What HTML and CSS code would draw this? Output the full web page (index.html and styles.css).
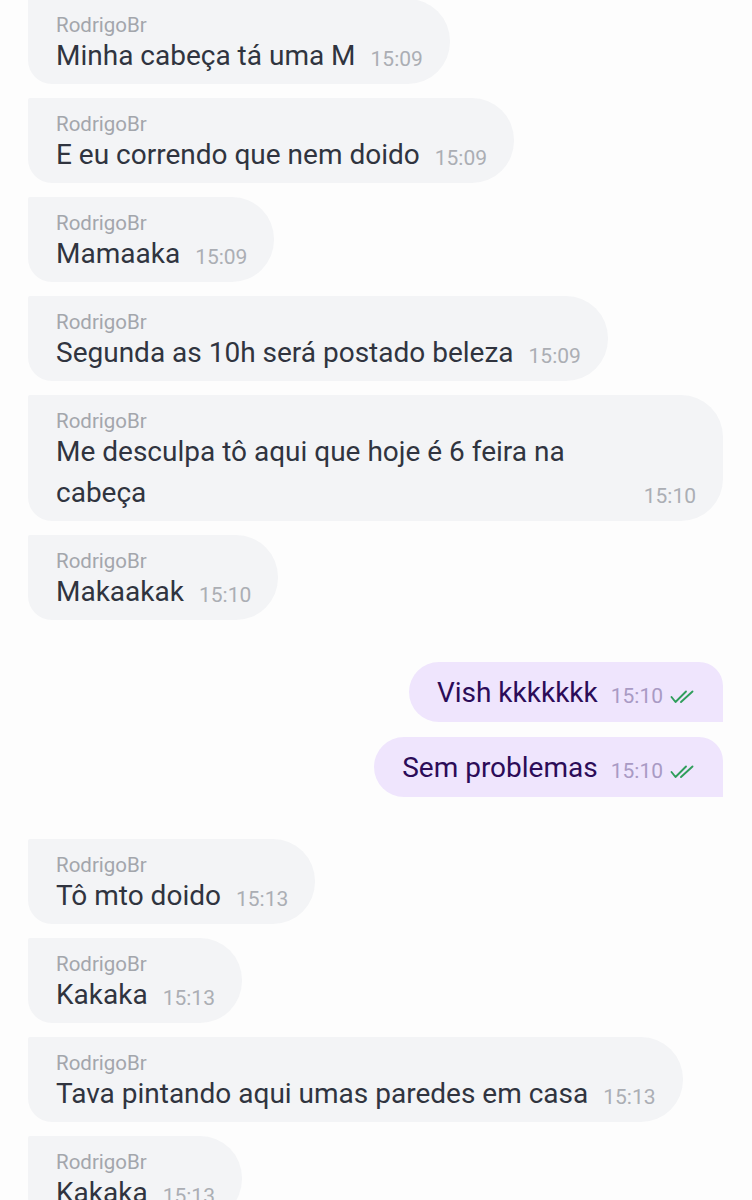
FILE: index.html
```html
<!DOCTYPE html>
<html lang="pt">
<head>
<meta charset="utf-8">
<title>Chat</title>
<link rel="stylesheet" href="styles.css">
</head>
<body>
<div class="chat">
  <div class="msg in">
    <div class="name">RodrigoBr</div>
    <div class="body">Minha cabeça tá uma M<span class="time">15:09</span></div>
  </div>
  <div class="msg in">
    <div class="name">RodrigoBr</div>
    <div class="body">E eu correndo que nem doido<span class="time">15:09</span></div>
  </div>
  <div class="msg in">
    <div class="name">RodrigoBr</div>
    <div class="body">Mamaaka<span class="time">15:09</span></div>
  </div>
  <div class="msg in">
    <div class="name">RodrigoBr</div>
    <div class="body">Segunda as 10h será postado beleza<span class="time">15:09</span></div>
  </div>
  <div class="msg in wide">
    <div class="name">RodrigoBr</div>
    <div class="body">Me desculpa tô aqui que hoje é 6 feira na<br>cabeça<span class="time">15:10</span></div>
  </div>
  <div class="msg in">
    <div class="name">RodrigoBr</div>
    <div class="body">Makaakak<span class="time">15:10</span></div>
  </div>

  <div class="msg out first">
    <div class="body">Vish kkkkkkk<span class="time">15:10<svg class="tick" viewBox="0 0 26 14" width="26" height="14"><path d="M1.5 7 L5.5 12 L16 1.5 M11 12 L22.5 1.5" fill="none" stroke="#2f9e5b" stroke-width="1.9" stroke-linecap="round" stroke-linejoin="round"/></svg></span></div>
  </div>
  <div class="msg out">
    <div class="body">Sem problemas<span class="time">15:10<svg class="tick" viewBox="0 0 26 14" width="26" height="14"><path d="M1.5 7 L5.5 12 L16 1.5 M11 12 L22.5 1.5" fill="none" stroke="#2f9e5b" stroke-width="1.9" stroke-linecap="round" stroke-linejoin="round"/></svg></span></div>
  </div>

  <div class="msg in first">
    <div class="name">RodrigoBr</div>
    <div class="body">Tô mto doido<span class="time">15:13</span></div>
  </div>
  <div class="msg in">
    <div class="name">RodrigoBr</div>
    <div class="body">Kakaka<span class="time">15:13</span></div>
  </div>
  <div class="msg in">
    <div class="name">RodrigoBr</div>
    <div class="body">Tava pintando aqui umas paredes em casa<span class="time">15:13</span></div>
  </div>
  <div class="msg in">
    <div class="name">RodrigoBr</div>
    <div class="body">Kakaka<span class="time">15:13</span></div>
  </div>
</div>
</body>
</html>
```

FILE: styles.css
```css
html, body {
  margin: 0;
  padding: 0;
  background: #fdfdfd;
}

body {
  font-family: Roboto, "Noto Sans", "Liberation Sans", sans-serif;
  width: 752px;
  height: 1200px;
  overflow: hidden;
}

.chat {
  display: flex;
  flex-direction: column;
  align-items: flex-start;
  padding: 0 29px 0 28px;
  margin-top: -1px;
}

.msg {
  max-width: 695px;
  box-sizing: border-box;
  margin-top: 14px;
}

.msg:first-child {
  margin-top: 0;
}

.msg.first {
  margin-top: 42px;
}

.msg.wide {
  width: 695px;
}

.msg.in {
  background: #f3f4f6;
  border-radius: 2px 42px 42px 24px;
  padding: 16px 27px 8px 28px;
}

.msg.out {
  align-self: flex-end;
  background: #efe5fd;
  border-radius: 30px 24px 0 30px;
  padding: 10px 27px 9px 28px;
}

.msg.out.first + .msg.out {
  margin-top: 15px;
}

.name {
  font-size: 20.5px;
  line-height: 20px;
  color: #a3a6ac;
  white-space: nowrap;
}

.body {
  font-size: 28px;
  line-height: 41px;
  color: #30343f;
}

.out .body {
  color: #2c0c58;
}

.time {
  float: right;
  font-size: 21px;
  line-height: 34px;
  padding-top: 7px;
  margin-left: 15px;
  color: #abaeb4;
  white-space: nowrap;
  display: flex;
  align-items: flex-start;
}

.out .time {
  color: #a99ac4;
  margin-left: 13px;
}

.tick {
  margin-left: 7px;
  margin-top: 11px;
}
```
